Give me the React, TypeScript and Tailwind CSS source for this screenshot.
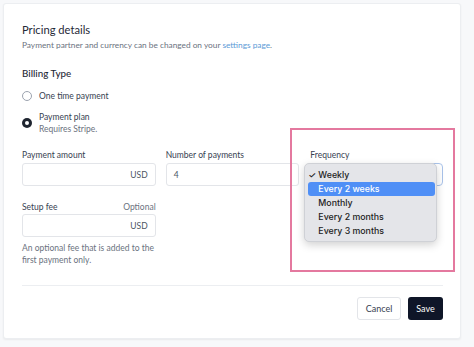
import React from "react";

function Radio({ checked }: { checked?: boolean }) {
  return checked ? (
    <span className="flex h-[10px] w-[10px] shrink-0 items-center justify-center rounded-full bg-[#1f2530]">
      <span className="h-[4px] w-[4px] rounded-full bg-white" />
    </span>
  ) : (
    <span className="h-[10px] w-[10px] shrink-0 rounded-full border border-[#9ca3af] bg-white" />
  );
}

function Input({ suffix, value }: { suffix?: string; value?: string }) {
  return (
    <div className="flex h-[23px] items-center justify-between rounded-[3px] border border-[#e3e5e9] bg-white px-[7px] text-[8.5px] text-[#4b5563]">
      <span>{value}</span>
      <span>{suffix}</span>
    </div>
  );
}

export default function App() {
  const items = ["Weekly", "Every 2 weeks", "Monthly", "Every 2 months", "Every 3 months"];
  return (
    <div
      className="h-[347px] w-[474px] overflow-hidden bg-[#f7f8fa] pl-[3px] pt-[3px]"
      style={{ fontFamily: "Lato, 'Noto Sans', sans-serif" }}
    >
      <div className="relative h-[336px] w-[458px] rounded-[3px] border border-[#eceef1] bg-white pb-[19px] pl-[18px] pr-[17px] pt-[18px] shadow-[0_1px_2px_rgba(0,0,0,0.06)]">
        <div className="text-[11.2px] leading-[16px] text-[#1f2937]">Pricing details</div>
        <div className="mt-[1px] text-[8.3px] leading-[12px] text-[#6b7280]">
          Payment partner and currency can be changed on your{" "}
          <span className="text-[#5b9ad6]">settings page</span>.
        </div>

        <div className="mt-[15px] text-[9.8px] font-medium leading-[14px] text-[#1f2937]">Billing Type</div>

        <div className="mt-[10px] flex h-[12px] items-center gap-[7px] text-[8.5px] text-[#374151]">
          <Radio />
          <span>One time payment</span>
        </div>

        <div className="mt-[9px] flex items-center gap-[7px]">
          <Radio checked />
          <div className="text-[8.5px] leading-[12px]">
            <div className="text-[#374151]">Payment plan</div>
            <div className="text-[#6b7280]">Requires Stripe.</div>
          </div>
        </div>

        <div className="mt-[14px] grid grid-cols-3 gap-x-[10px] text-[8.5px] leading-[12px]">
          <div>
            <div className="mb-[2px] text-[#374151]">Payment amount</div>
            <Input suffix="USD" />
            <div className="mb-[1px] mt-[15px] flex justify-between">
              <span className="text-[#374151]">Setup fee</span>
              <span className="text-[#6b7280]">Optional</span>
            </div>
            <Input suffix="USD" />
            <div className="mt-[5px] text-[#6b7280]">
              An optional fee that is added to the
              <br />
              first payment only.
            </div>
          </div>
          <div>
            <div className="mb-[2px] text-[#374151]">Number of payments</div>
            <Input value="4" />
          </div>
          <div className="relative">
            <div className="mb-[2px] pl-[1px] text-[#374151]">Frequency</div>
            <div className="h-[23px] rounded-[4px] border border-[#a9c3ea] bg-white" />
            <div
              className="absolute left-[-5px] top-[14px] w-[133px] rounded-[5px] border border-[#cfd1d6] bg-[#e4e5e9] pb-[3px] pt-[4px] shadow-[0_3px_8px_rgba(0,0,0,0.18)]"
              style={{ fontFamily: "Inter, 'Liberation Sans', sans-serif" }}
            >
              {items.map((it, i) => (
                <div
                  key={it}
                  className={
                    i === 1
                      ? "ml-[3px] mr-[1px] flex h-[14px] items-center rounded-[3px] bg-[#4f8ff6] pl-[10px] text-[8.8px] font-medium text-white"
                      : "flex h-[14px] items-center pl-[13px] text-[8.8px] font-medium text-[#222222]"
                  }
                >
                  {i === 0 ? (
                    <span className="relative">
                      <span className="absolute left-[-10px]">✓</span>
                      {it}
                    </span>
                  ) : (
                    it
                  )}
                </div>
              ))}
            </div>
          </div>
        </div>

        <div className="mt-[19px] h-px bg-[#eceef1]" />

        <div className="mt-[11px] flex justify-end gap-[7px] text-[9px]">
          <button className="h-[23px] w-[44px] rounded-[3px] border border-[#e3e5e9] bg-white text-[#374151]">
            Cancel
          </button>
          <button className="h-[23px] w-[35px] rounded-[3px] bg-[#0f1628] text-white">Save</button>
        </div>

        <div className="pointer-events-none absolute left-[286px] top-[124px] h-[144px] w-[165px] border-2 border-[#e4799f]" />
      </div>
    </div>
  );
}
